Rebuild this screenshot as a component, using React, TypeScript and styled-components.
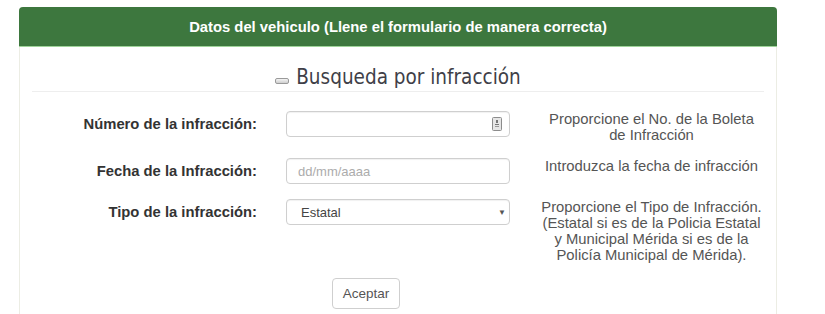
import styled, { createGlobalStyle } from 'styled-components';

const GlobalStyle = createGlobalStyle`
  html, body {
    margin: 0;
    padding: 0;
    background: #fff;
    font-family: "Liberation Sans", Arial, sans-serif;
    font-size: 14.8px;
    color: #333;
  }
  * {
    box-sizing: border-box;
  }
`;

const Panel = styled.div`
  margin: 7px 0 0 19px;
  width: 758px;
  border: 1px solid #ecede4;
  border-top: none;
  border-radius: 4px 4px 0 0;
  background: #fff;
`;

const PanelHeading = styled.div`
  height: 40px;
  display: flex;
  align-items: center;
  justify-content: center;
  background: #3d773e;
  border-bottom: 1px solid #9fd49a;
  border-radius: 4px 4px 0 0;
  margin: 0 -1px;
  color: #fff;
  font-weight: bold;
  font-size: 14.8px;
`;

const PanelBody = styled.div`
  padding: 0 12px 8px;
`;

const Legend = styled.div`
  display: flex;
  align-items: center;
  justify-content: center;
  gap: 7px;
  padding: 18px 0 2px;
  border-bottom: 1px solid #eeeeee;
`;

const LegendTitle = styled.span`
  font-family: "DejaVu Sans Condensed", "DejaVu Sans", sans-serif;
  font-stretch: condensed;
  font-size: 20.5px;
  line-height: 24px;
  color: #3f3f48;
`;

const CollapseToggle = styled.span`
  width: 14px;
  height: 6px;
  margin-top: 8px;
  border: 1px solid #9a9a9a;
  border-radius: 2px;
  background: linear-gradient(#f4f4f4, #cfcfcf);
`;

const Form = styled.form`
  margin-top: 19px;
`;

const FormGroup = styled.div`
  display: grid;
  grid-template-columns: 225px 224px 1fr;
  column-gap: 29px;
  align-items: start;
  margin-bottom: 15px;
`;

const Label = styled.label`
  text-align: right;
  font-weight: bold;
  line-height: 26px;
  color: #333;
`;

const Field = styled.div`
  position: relative;
  height: 26px;
`;

const TextInput = styled.input`
  width: 100%;
  height: 26px;
  padding: 0 11px;
  border: 1px solid #cfcfcf;
  border-radius: 4px;
  box-shadow: inset 0 1px 1px rgba(0, 0, 0, 0.06);
  font-family: inherit;
  font-size: 13px;
  color: #555;
  outline: none;

  &::placeholder {
    color: #acacac;
  }
`;

const Select = styled.select`
  width: 100%;
  height: 26px;
  padding: 0 14px;
  border: 1px solid #cfcfcf;
  border-radius: 4px;
  background: #fff;
  box-shadow: inset 0 1px 1px rgba(0, 0, 0, 0.06);
  font-family: inherit;
  font-size: 13px;
  color: #444;
  appearance: none;
  outline: none;
`;

const FieldAddon = styled.span`
  position: absolute;
  top: 50%;
  right: 8px;
  transform: translateY(-50%);
  display: flex;
  pointer-events: none;
`;

const Caret = styled.span`
  position: absolute;
  top: 50%;
  right: 4px;
  transform: translateY(-50%);
  font-size: 8px;
  color: #555;
  pointer-events: none;
`;

const Help = styled.div`
  text-align: center;
  line-height: 16px;
  color: #555;
`;

const Actions = styled.div`
  padding-left: 300px;
`;

const Button = styled.button`
  width: 68px;
  height: 31px;
  border: 1px solid #cfcfcf;
  border-radius: 4px;
  background: #fff;
  font-family: inherit;
  font-size: 13.5px;
  color: #555;
`;

function AutofillIcon() {
  return (
    <svg width='10' height='14' viewBox='0 0 10 14'>
      <rect x='0.5' y='0.5' width='9' height='13' rx='1' fill='#e6e6e6' stroke='#8c8c8c' />
      <rect x='4' y='3' width='2' height='3' fill='#777' />
      <rect x='3' y='7' width='4' height='1' fill='#777' />
      <rect x='3' y='9' width='4' height='1' fill='#999' />
    </svg>
  );
}

export default function App() {
  return (
    <>
      <GlobalStyle />
      <Panel>
        <PanelHeading>Datos del vehiculo (Llene el formulario de manera correcta)</PanelHeading>
        <PanelBody>
          <Legend>
            <CollapseToggle />
            <LegendTitle>Busqueda por infracción</LegendTitle>
          </Legend>
          <Form onSubmit={(e) => e.preventDefault()}>
            <FormGroup>
              <Label htmlFor='numero'>Número de la infracción:</Label>
              <Field>
                <TextInput id='numero' type='text' />
                <FieldAddon>
                  <AutofillIcon />
                </FieldAddon>
              </Field>
              <Help>
                Proporcione el No. de la Boleta
                <br />
                de Infracción
              </Help>
            </FormGroup>
            <FormGroup>
              <Label htmlFor='fecha'>Fecha de la Infracción:</Label>
              <Field>
                <TextInput id='fecha' type='text' placeholder='dd/mm/aaaa' />
              </Field>
              <Help>Introduzca la fecha de infracción</Help>
            </FormGroup>
            <FormGroup>
              <Label htmlFor='tipo'>Tipo de la infracción:</Label>
              <Field>
                <Select id='tipo' defaultValue='estatal'>
                  <option value='estatal'>Estatal</option>
                  <option value='municipal'>Municipal Mérida</option>
                </Select>
                <Caret>▼</Caret>
              </Field>
              <Help>
                Proporcione el Tipo de Infracción.
                <br />
                (Estatal si es de la Policia Estatal
                <br />
                y Municipal Mérida si es de la
                <br />
                Policía Municipal de Mérida).
              </Help>
            </FormGroup>
            <Actions>
              <Button type='submit'>Aceptar</Button>
            </Actions>
          </Form>
        </PanelBody>
      </Panel>
    </>
  );
}
